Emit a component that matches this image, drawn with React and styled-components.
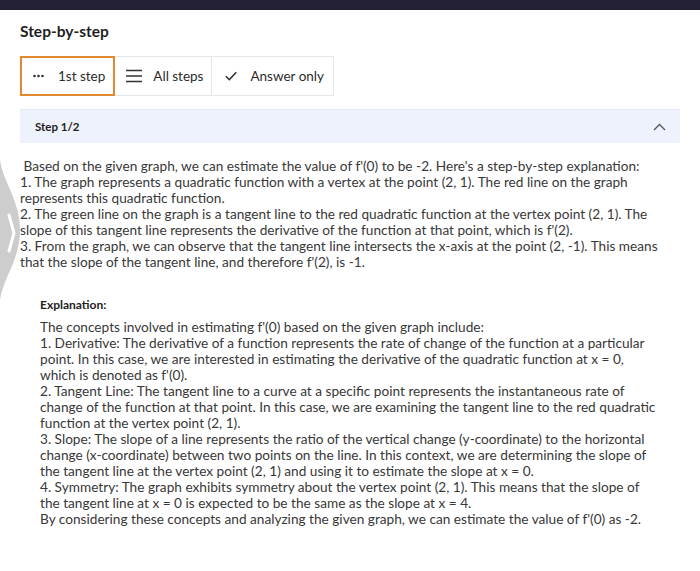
import React from "react";
import styled, { createGlobalStyle } from "styled-components";

const Global = createGlobalStyle`
  html, body { margin: 0; padding: 0; background: #fff; }
  body { font-family: Lato, "Open Sans", "Noto Sans", sans-serif; color: #333; }
`;

const Page = styled.div`
  position: relative;
  width: 700px;
  min-height: 571px;
  background: #fff;
  overflow: hidden;
`;

const TopBar = styled.div`
  height: 10px;
  background: #232036;
`;

const Main = styled.div`
  padding: 10px 20px 0 20px;
`;

const Title = styled.h2`
  margin: 0;
  font-size: 15.5px;
  font-weight: 700;
  color: #1f1f1f;
  line-height: 20px;
  padding-top: 1px;
`;

const Tabs = styled.div`
  display: flex;
  margin-top: 15px;
`;

const Tab = styled.div`
  box-sizing: border-box;
  height: 40px;
  display: flex;
  align-items: center;
  gap: ${(p) => p.$gap}px;
  padding: 0 ${(p) => p.$pr}px 0 ${(p) => p.$pl}px;
  font-size: 13.5px;
  color: #2b2b2b;
  border: ${(p) => (p.$active ? "2px solid #e3892f" : "1px solid #e6e6e6")};
  margin-left: ${(p) => (p.$first ? 0 : "-1px")};
  background: #fff;
  position: relative;
  z-index: ${(p) => (p.$active ? 1 : 0)};
`;

const StepHeader = styled.div`
  margin-top: 13px;
  height: 34px;
  background: #eef2fc;
  border-top: 1px solid #e4e8f2;
  box-sizing: border-box;
  display: flex;
  align-items: center;
  justify-content: space-between;
  padding: 0 14px 0 15px;
`;

const StepLabel = styled.span`
  font-size: 11.5px;
  font-weight: 700;
  color: #222;
`;

const Body = styled.div`
  margin-top: 15px;
  font-size: 13.65px;
  line-height: 16px;
  color: #383838;
  white-space: pre;
`;

const Explanation = styled.div`
  padding: 27px 0 0 20px;
`;

const ExplLabel = styled.div`
  font-size: 12px;
  font-weight: 700;
  color: #222;
  line-height: 16px;
`;

const ExplText = styled.div`
  margin-top: 6px;
  font-size: 13.65px;
  line-height: 16px;
  color: #383838;
  white-space: pre;
`;

const EdgeNav = styled.svg`
  position: absolute;
  left: 0;
  top: 160px;
`;

const Dots = () => (
  <svg width="11" height="4" viewBox="0 0 11 4">
    <circle cx="1.5" cy="2" r="1.3" fill="#333" />
    <circle cx="5.5" cy="2" r="1.3" fill="#333" />
    <circle cx="9.5" cy="2" r="1.3" fill="#333" />
  </svg>
);

const Lines = () => (
  <svg width="16" height="14" viewBox="0 0 16 14">
    <path d="M0 1.5H16M0 7H16M0 12.5H16" stroke="#333" strokeWidth="1.4" />
  </svg>
);

const Check = () => (
  <svg width="12" height="10" viewBox="0 0 12 10">
    <path d="M0.8 5.2L4.3 8.6L11.3 1.2" stroke="#333" strokeWidth="1.5" fill="none" />
  </svg>
);

const ChevronUp = () => (
  <svg width="13" height="8" viewBox="0 0 13 8">
    <path d="M1 7L6.5 1.5L12 7" stroke="#555" strokeWidth="1.3" fill="none" />
  </svg>
);

const bodyLines = [
  " Based on the given graph, we can estimate the value of f'(0) to be -2. Here's a step-by-step explanation:",
  "1. The graph represents a quadratic function with a vertex at the point (2, 1). The red line on the graph",
  "represents this quadratic function.",
  "2. The green line on the graph is a tangent line to the red quadratic function at the vertex point (2, 1). The",
  "slope of this tangent line represents the derivative of the function at that point, which is f'(2).",
  "3. From the graph, we can observe that the tangent line intersects the x-axis at the point (2, -1). This means",
  "that the slope of the tangent line, and therefore f'(2), is -1.",
];

const explLines = [
  "The concepts involved in estimating f'(0) based on the given graph include:",
  "1. Derivative: The derivative of a function represents the rate of change of the function at a particular",
  "point. In this case, we are interested in estimating the derivative of the quadratic function at x = 0,",
  "which is denoted as f'(0).",
  "2. Tangent Line: The tangent line to a curve at a specific point represents the instantaneous rate of",
  "change of the function at that point. In this case, we are examining the tangent line to the red quadratic",
  "function at the vertex point (2, 1).",
  "3. Slope: The slope of a line represents the ratio of the vertical change (y-coordinate) to the horizontal",
  "change (x-coordinate) between two points on the line. In this context, we are determining the slope of",
  "the tangent line at the vertex point (2, 1) and using it to estimate the slope at x = 0.",
  "4. Symmetry: The graph exhibits symmetry about the vertex point (2, 1). This means that the slope of",
  "the tangent line at x = 0 is expected to be the same as the slope at x = 4.",
  "By considering these concepts and analyzing the given graph, we can estimate the value of f'(0) as -2.",
];

export default function App() {
  return (
    <Page>
      <Global />
      <TopBar />
      <Main>
        <Title>Step-by-step</Title>
        <Tabs>
          <Tab $active $first $pl={11} $pr={8} $gap={14}>
            <Dots />
            <span>1st step</span>
          </Tab>
          <Tab $pl={11} $pr={8} $gap={11}>
            <Lines />
            <span>All steps</span>
          </Tab>
          <Tab $pl={13} $pr={9} $gap={13}>
            <Check />
            <span>Answer only</span>
          </Tab>
        </Tabs>
        <StepHeader>
          <StepLabel>Step 1/2</StepLabel>
          <ChevronUp />
        </StepHeader>
        <Body>
          {bodyLines.map((l, i) => (
            <div key={i}>{l}</div>
          ))}
        </Body>
        <Explanation>
          <ExplLabel>Explanation:</ExplLabel>
          <ExplText>
            {explLines.map((l, i) => (
              <div key={i}>{l}</div>
            ))}
          </ExplText>
        </Explanation>
      </Main>
      <EdgeNav width="24" height="140" viewBox="0 0 24 140">
        <path d="M0 0 C3 22 20 40 20 70 C20 100 3 118 0 140 Z" fill="rgba(200,200,200,0.9)" />
        <path d="M9 55 L14 73 L9 91" stroke="#fff" strokeWidth="3" fill="none" strokeLinecap="round" strokeLinejoin="round" />
      </EdgeNav>
    </Page>
  );
}
